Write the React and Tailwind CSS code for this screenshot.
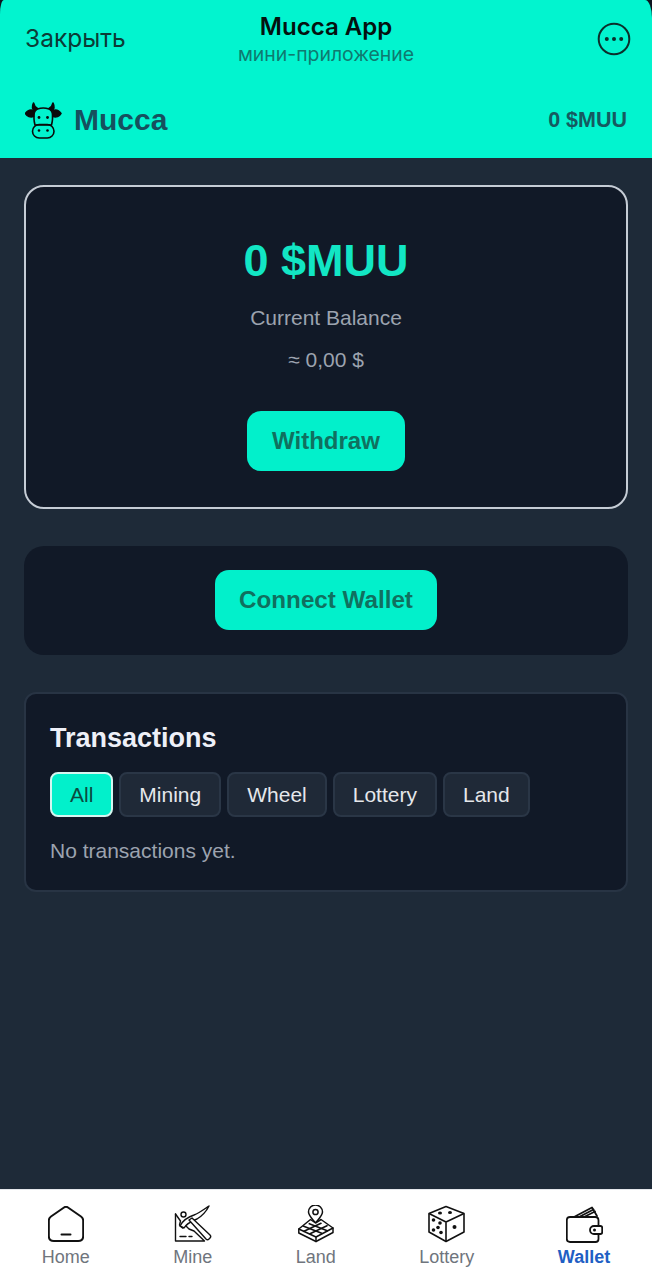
import React from "react";

const TABS = ["All", "Mining", "Wheel", "Lottery", "Land"];

function CowIcon() {
  return (
    <svg width="37" height="37" viewBox="0 0 37 37" fill="none" stroke="#0a0a0a" strokeWidth="1.6" strokeLinecap="round" strokeLinejoin="round">
      <path d="M0.5 11.5c2-3 5-4 8-3v6c-3 1-6.5 0-8-3z" fill="#0a0a0a" />
      <path d="M36 11.5c-2-3-5-4-8-3v6c3 1 6.5 0 8-3z" fill="#0a0a0a" />
      <path d="M8.5 1c-1.500 3-1 6 1 8l3-2.500C10.500 5.500 9 4 8.500 1z" fill="#0a0a0a" />
      <path d="M28 1c1.500 3 1 6-1 8l-3-2.500C26 5.500 27.500 4 28 1z" fill="#0a0a0a" />
      <path d="M12.500 7c3.500-1.300 8-1.300 11.500 0 2.500 1 3.500 3 3.500 6v4c0 2-0.500 4-1 6H10c-0.500-2-1-4-1-6v-4c0-3 1-5 3.500-6z" />
      <rect x="7.5" y="22.5" width="21.5" height="13.5" rx="6.7" />
      <circle cx="14" cy="15.5" r="1.4" fill="#0a0a0a" stroke="none" />
      <circle cx="22.5" cy="15.5" r="1.4" fill="#0a0a0a" stroke="none" />
      <circle cx="14" cy="28.5" r="1.3" fill="#0a0a0a" stroke="none" />
      <circle cx="22.5" cy="28.5" r="1.3" fill="#0a0a0a" stroke="none" />
    </svg>
  );
}

function HomeIcon() {
  return (
    <svg width="36" height="36" viewBox="0 0 36 36" fill="none" stroke="#111" strokeWidth="2" strokeLinecap="round" strokeLinejoin="round">
      <path d="M16 1.500c1.200-0.800 2.800-0.800 4 0L33 10.500c1.500 1 2.200 2.300 2.200 4V30c0 3-2 5-5 5H5.800c-3 0-5-2-5-5V14.500c0-1.700 0.700-3 2.200-4z" />
      <path d="M13.5 28.500h9" />
    </svg>
  );
}

function MineIcon() {
  return (
    <svg width="38" height="38" viewBox="0 0 38 38" fill="none" stroke="#111" strokeWidth="1.4" strokeLinecap="round" strokeLinejoin="round">
      <path d="M1.5 9v27h29L20 26l-5-2-4-4" />
      <path d="M1.5 9l5 7-1 4 3 3" />
      <circle cx="9.5" cy="9.5" r="2.5" />
      <path d="M6 21c3-6 8-9 14-11 5-2 9-5 15-9-3 6-7 10-12 13-5 2-10 4-13 9z" fill="#fff" />
      <path d="M15 15l3-2 18 17c1 1 1 2 0 3l-1 1c-1 1-2 1-3 0z" fill="#fff" />
      <path d="M6 31.500h6M15 31.500h3" />
    </svg>
  );
}

function LandIcon() {
  return (
    <svg width="36" height="38" viewBox="0 0 36 38" fill="none" stroke="#111" strokeWidth="1.5" strokeLinecap="round" strokeLinejoin="round">
      <path d="M17.5 18c-3-4-7-7.500-7-11a7 7 0 0 1 14 0c0 3.500-4 7-7 11z" />
      <circle cx="17.5" cy="7" r="2.6" />
      <path d="M12.5 14.500L0.800 24 18 32 35 23 23 14.500l-5.500 3.500z" fill="#fff" />
      <g strokeWidth="1.6">
        <path d="M23 18.300L6 26.300M29 20.700L12 28.700" />
        <path d="M11.300 18.700L29.300 25.700M5.700 21.300L23.700 28.300" />
      </g>
      <path d="M0.800 24v4L18 36.500 35 27.500V23" />
      <path d="M18 32v4.500" />
    </svg>
  );
}

function DiceIcon() {
  return (
    <svg width="37" height="38" viewBox="0 0 37 38" fill="none" stroke="#111" strokeWidth="1.6" strokeLinejoin="round">
      <path d="M18 1.500L36 8.500V27L18 36.500 1 27V8.500z" />
      <path d="M1 8.500L18 17l18-8.500M18 17v19.500" />
      <g fill="#111" stroke="none">
        <ellipse cx="12" cy="8" rx="2" ry="1.5" />
        <ellipse cx="22" cy="7.5" rx="2" ry="1.5" />
        <circle cx="5.5" cy="15" r="1.8" />
        <circle cx="12" cy="18" r="1.8" />
        <circle cx="10" cy="22.5" r="1.8" />
        <circle cx="5.5" cy="25" r="1.8" />
        <circle cx="13" cy="27.5" r="1.8" />
        <circle cx="26.5" cy="22" r="2" />
      </g>
    </svg>
  );
}

function WalletIcon() {
  return (
    <svg width="37" height="37" viewBox="0 0 37 37" fill="none" stroke="#111" strokeWidth="1.8" strokeLinejoin="round" strokeLinecap="round">
      <path d="M8 11L26 1.500 31 10" />
      <path d="M13 11L27.500 3.500M18 11L29 5.500" />
      <path d="M32.500 20v-5.500c0-2-1.300-3.500-3.300-3.500H4c-2 0-3.200 1.500-3.200 3.500V33c0 2 1.200 3 3.200 3h25.500c2 0 3-1 3-3v-5" />
      <path d="M28 20h6.500c1 0 1.700 0.700 1.700 1.700v4.600c0 1-0.700 1.700-1.700 1.700H28c-2.200 0-4-1.800-4-4s1.800-4 4-4z" />
      <circle cx="28.5" cy="24" r="1.5" fill="#111" stroke="none" />
    </svg>
  );
}

const NAV = [
  { label: "Home", Icon: HomeIcon },
  { label: "Mine", Icon: MineIcon },
  { label: "Land", Icon: LandIcon },
  { label: "Lottery", Icon: DiceIcon },
  { label: "Wallet", Icon: WalletIcon, active: true },
];

export default function App() {
  return (
    <div className="flex h-[1280px] w-[652px] flex-col overflow-hidden bg-[#1e2a38] font-['Liberation_Sans',Arial,sans-serif]">
      <div className="bg-[#0d1520]">
        <header className="rounded-tl-[4px_14px] rounded-tr-[7px_18px] bg-[#02f4cf]">
          <div className="grid h-[90px] grid-cols-[1fr_auto_1fr] items-start px-6 font-['Inter',sans-serif]">
            <span className="pt-[23px] pl-px text-[24.5px] leading-[30px] text-[#0c3b36]">Закрыть</span>
            <div className="flex flex-col items-center pt-[12px]">
              <span className="text-[24px] leading-[30px] font-semibold text-[#04120f]">Mucca App</span>
              <span className="text-[19.4px] leading-[24px] text-[#0f7a70]">мини-приложение</span>
            </div>
            <div className="flex justify-end pt-[22px]">
              <svg width="34" height="34" viewBox="0 0 34 34" fill="none" className="mr-[-3px]">
                <circle cx="17" cy="17" r="15.3" stroke="#0b2f2b" strokeWidth="2" />
                <circle cx="9.8" cy="17" r="2" fill="#0b2f2b" />
                <circle cx="17" cy="17" r="2" fill="#0b2f2b" />
                <circle cx="24.2" cy="17" r="2" fill="#0b2f2b" />
              </svg>
            </div>
          </div>
          <div className="flex h-[68px] items-start justify-between px-[25px]">
            <div className="flex items-center gap-[12px] pt-[10px]">
              <CowIcon />
              <span className="text-[30px] leading-[40px] font-bold text-[#16505e]">Mucca</span>
            </div>
            <span className="pt-[16px] text-[21.5px] leading-[28px] font-bold text-[#155a60]">0 $MUU</span>
          </div>
        </header>
      </div>

      <main className="flex flex-1 flex-col gap-[37px] px-6 pt-[27px]">
        <section className="flex h-[324px] flex-col items-center rounded-[20px] border-2 border-[#c5ccd5] bg-[#111927] pt-[45px]">
          <div className="text-[45px] leading-[58px] font-bold text-[#12e6c4]">0 $MUU</div>
          <div className="mt-[14px] text-[21px] leading-[28px] text-[#9ca3af]">Current Balance</div>
          <div className="mt-[14px] text-[21px] leading-[28px] text-[#9ca3af]">≈ 0,00 $</div>
          <button className="mt-[37px] h-[60px] w-[158px] rounded-[14px] bg-[#02f0cb] text-[24px] font-bold text-[#10705f]">Withdraw</button>
        </section>

        <section className="flex h-[109px] items-start justify-center rounded-[20px] bg-[#111927] pt-[24px]">
          <button className="h-[60px] w-[222px] rounded-[14px] bg-[#02f0cb] text-[24.2px] font-bold text-[#10705f]">Connect Wallet</button>
        </section>

        <section className="flex h-[200px] flex-col rounded-[12px] border-2 border-[#283444] bg-[#111927] px-[24px] pt-[26px]">
          <h2 className="text-[27px] leading-[36px] font-bold text-[#eef0f8]">Transactions</h2>
          <div className="mt-[16px] flex gap-[6px]">
            {TABS.map((tab) =>
              tab === "All" ? (
                <button key={tab} className="h-[45px] rounded-[8px] border-2 border-[#d5f6f0] bg-[#02f0cb] px-[18px] text-[21px] text-[#0b4a40]">
                  {tab}
                </button>
              ) : (
                <button key={tab} className="h-[45px] rounded-[8px] border-2 border-[#2a3646] bg-[#1f2937] px-[18px] text-[21px] text-[#e5e7eb]">
                  {tab}
                </button>
              )
            )}
          </div>
          <p className="mt-[20px] text-[21px] leading-[28px] text-[#9ca3af]">No transactions yet.</p>
        </section>
      </main>

      <nav className="flex h-[91px] items-start justify-around border-t border-[#e5e7eb] bg-white pt-[15px]">
        {NAV.map(({ label, Icon, active }) => (
          <div key={label} className="flex flex-col items-center">
            <div className="flex h-[38px] items-center">
              <Icon />
            </div>
            {active ? (
              <span className="mt-[2px] text-[18px] leading-[24px] font-bold text-[#1f5fc4]">{label}</span>
            ) : (
              <span className="mt-[2px] text-[18px] leading-[24px] text-[#6f757d]">{label}</span>
            )}
          </div>
        ))}
      </nav>
    </div>
  );
}
